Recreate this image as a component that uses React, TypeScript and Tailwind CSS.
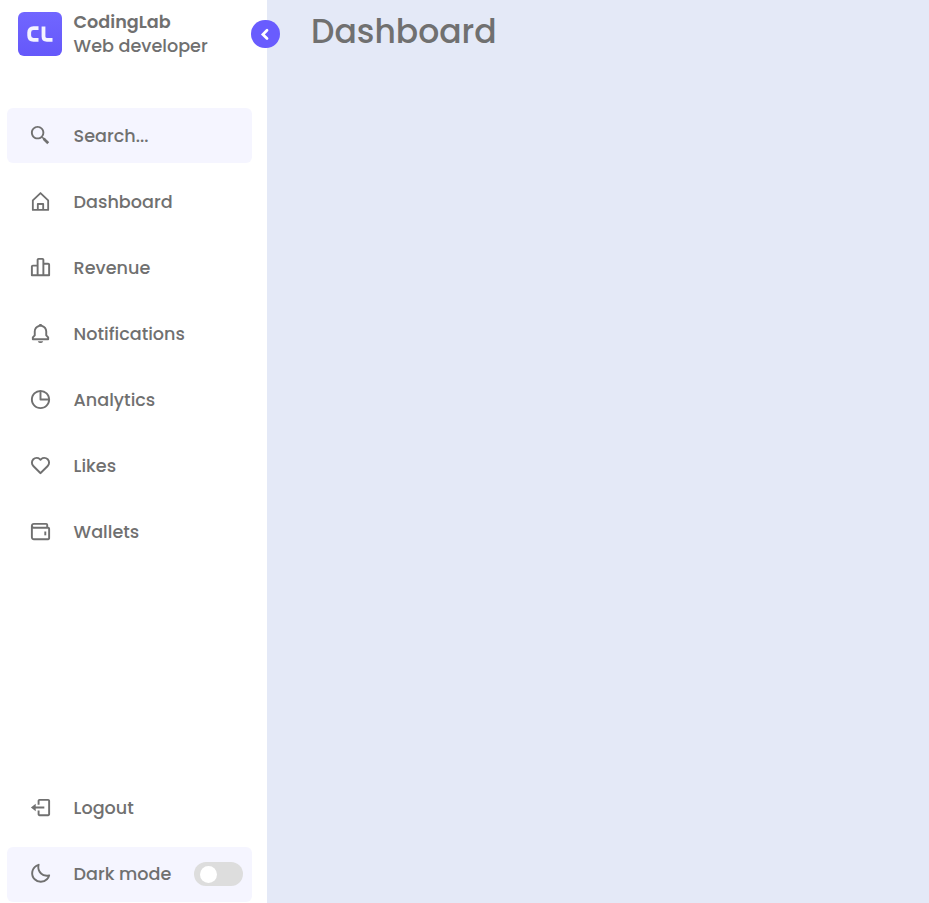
import {
  BiBarChartAlt2,
  BiBell,
  BiHeart,
  BiLogOut,
  BiMoon,
  BiPieChartAlt,
  BiWallet,
} from "react-icons/bi";
import type { ComponentType } from "react";

type Item = { label: string; icon: ComponentType<{ size?: number }> };

function SearchIcon({ size = 23 }: { size?: number }) {
  return (
    <svg width={size} height={size} viewBox="0 0 24 24" fill="currentColor">
      <path d="M19.023 16.977a35.13 35.13 0 0 1-1.367-1.384c-.372-.378-.596-.653-.596-.653l-2.8-1.337A6.962 6.962 0 0 0 16 9c0-3.859-3.14-7-7-7S2 5.141 2 9s3.14 7 7 7c1.763 0 3.37-.66 4.603-1.739l1.337 2.8s.275.224.653.596c.387.363.896.854 1.384 1.367l1.358 1.392.604.646 2.121-2.121-.646-.604c-.379-.372-.885-.866-1.391-1.36zM9 14c-2.757 0-5-2.243-5-5s2.243-5 5-5 5 2.243 5 5-2.243 5-5 5z" />
    </svg>
  );
}

function HomeIcon({ size = 23 }: { size?: number }) {
  return (
    <svg width={size} height={size} viewBox="0 0 24 24" fill="none" stroke="currentColor" strokeWidth="1.9" strokeLinejoin="round">
      <path d="M4 10.8 12 3.2l8 7.6V20.8H4z" />
      <path d="M9.2 20.8v-6.300h5.600v6.300" />
      <path d="M9.200 14.500h5.600" />
    </svg>
  );
}

const items: Item[] = [
  { label: "Dashboard", icon: HomeIcon },
  { label: "Revenue", icon: BiBarChartAlt2 },
  { label: "Notifications", icon: BiBell },
  { label: "Analytics", icon: BiPieChartAlt },
  { label: "Likes", icon: BiHeart },
  { label: "Wallets", icon: BiWallet },
];

function Row({ label, icon: Icon }: Item) {
  return (
    <a className="flex h-[55px] items-center rounded-md">
      <span className="flex w-[66.6px] shrink-0 justify-center">
        <Icon size={23} />
      </span>
      <span className="whitespace-nowrap pt-px">{label}</span>
    </a>
  );
}

export default function App() {
  return (
    <div className="flex h-[903px] w-full overflow-hidden bg-[#e4e9f7] font-['Poppins','Inter',sans-serif] text-[17.6px] font-medium text-[#707070]">
      <nav className="relative flex w-[267px] shrink-0 flex-col bg-white pr-[15px] pl-[7px]">
        <header className="flex h-[68px] items-center pl-[11px]">
          <div className="flex size-11 items-center justify-center rounded-md bg-linear-to-b from-[#7166ff] to-[#6558fa]">
            <svg width="28" height="18" viewBox="0 0 28 18" fill="none" stroke="#f4f3ff" strokeWidth="3.8" strokeLinejoin="round">
              <path d="M12.5 3.2H7.5Q3.2 3.2 3.2 7.5v3Q3.2 14.8 7.5 14.8h5" />
              <path d="M17.5 1.5v10Q17.5 14.8 20.8 14.8h5.7" />
            </svg>
          </div>
          <div className="ml-[11.6px] flex flex-col whitespace-nowrap leading-6">
            <span className="font-semibold">CodingLab</span>
            <span>Web developer</span>
          </div>
        </header>
        <button className="absolute top-[19.6px] right-[-12.6px] flex size-[28.4px] items-center justify-center rounded-full bg-[#695cfe] text-white">
          <svg width="22" height="22" viewBox="0 0 24 24" fill="none" stroke="currentColor" strokeWidth="3" strokeLinecap="round">
            <path d="M14.2 8 9.700 12.500l4.500 4.500" />
          </svg>
        </button>
        <div className="mt-10 rounded-md bg-[#f5f5ff]">
          <Row label="Search..." icon={SearchIcon} />
        </div>
        <div className="mt-[11px] flex flex-col gap-[11px]">
          {items.map((item) => (
            <Row key={item.label} {...item} />
          ))}
        </div>
        <div className="mt-auto mb-px flex flex-col gap-[11px]">
          <div className="-mt-px pb-px">
            <Row label="Logout" icon={BiLogOut} />
          </div>
          <div className="flex h-[55px] items-start justify-between rounded-md bg-[#f5f5ff] pr-[9px]">
            <div className="-mt-px">
              <Row label="Dark mode" icon={BiMoon} />
            </div>
            <span className="mt-[15px] flex h-6 w-[49px] items-center rounded-full bg-[#ddd] pl-[5.5px]">
              <span className="size-[17px] rounded-full bg-white" />
            </span>
          </div>
        </div>
      </nav>
      <main className="pt-2 pl-11">
        <h1 className="text-[33px] leading-[48px]">Dashboard</h1>
      </main>
    </div>
  );
}
